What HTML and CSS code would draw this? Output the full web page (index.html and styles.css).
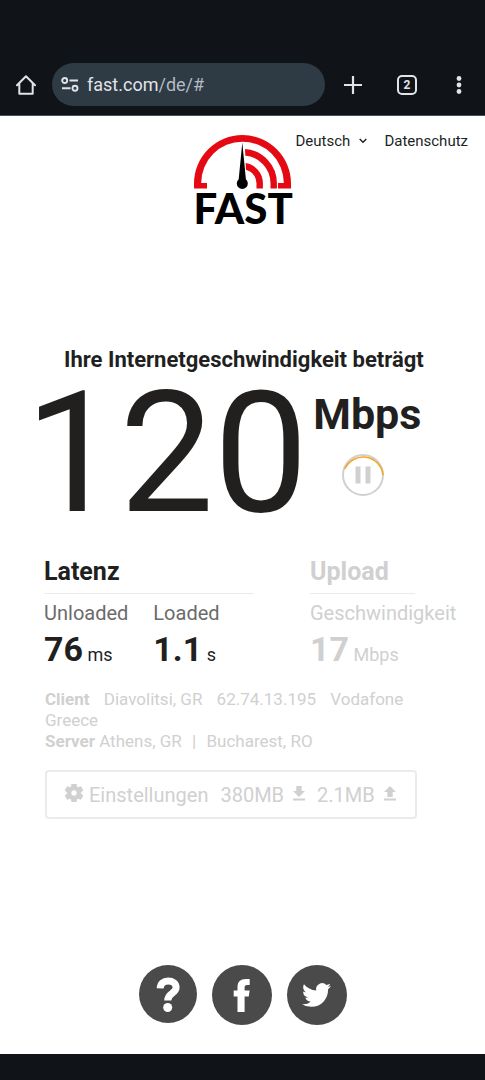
FILE: index.html
```
<!DOCTYPE html>
<html lang="de">
<head>
<meta charset="utf-8">
<meta name="viewport" content="width=device-width, initial-scale=1">
<title>FAST</title>
<link rel="stylesheet" href="styles.css">
</head>
<body>
<header class="browser-bar">
  <button class="bar-button" aria-label="Home">
    <svg width="20" height="20" viewBox="0 0 20 20" fill="none" stroke="currentColor" stroke-width="2" stroke-linejoin="round" stroke-linecap="round"><path d="M1 10.3 10 1.2l9 9.1M3.300 8.200V18.800h13.400V8.200"/></svg>
  </button>
  <a class="address" href="#">
    <svg class="site-icon" width="18" height="15" viewBox="0 0 18 15" fill="none" stroke="currentColor" stroke-width="1.900"><circle cx="3.700" cy="3.500" r="2.500"/><path d="M8.500 3.500H17M1 11.200h8.500"/><circle cx="14" cy="11.200" r="2.500"/></svg>
    <span>fast.com<span class="address-path">/de/#</span></span>
  </a>
  <button class="bar-button wide" aria-label="Neuer Tab">
    <svg width="18" height="18" viewBox="0 0 18 18" stroke="currentColor" stroke-width="2.200"><path d="M9 0v18M0 9h18"/></svg>
  </button>
  <button class="bar-button" aria-label="Tabs"><span class="tab-count">2</span></button>
  <button class="bar-button" aria-label="Menü">
    <svg width="6" height="18" viewBox="0 0 6 18" fill="currentColor"><circle cx="3" cy="2.500" r="2.400"/><circle cx="3" cy="9" r="2.400"/><circle cx="3" cy="15.500" r="2.400"/></svg>
  </button>
</header>

<main class="page">
  <div class="top">
    <a class="logo" href="#">
      <svg width="98" height="56" viewBox="0 0 98 56">
        <path fill="#e50914" d="M0 53.500V48.500a48.500 48.500 0 0 1 97 0V53.500H84V48H89.800A41.300 41.300 0 0 0 7.200 48H13V53.500z"/>
        <g fill="none" stroke="#e50914" stroke-width="6.400">
          <path d="M50.500 17.200A31.200 31.200 0 0 1 79.700 48.300V53.500"/>
          <path d="M50.500 31.300A17.200 17.200 0 0 1 65.700 48.300V53.500"/>
        </g>
        <path fill="#fff" d="M47.800 14h3.200l1.600 35h-5z"/>
        <path d="M48.300 7.500l3.600 36.800a5.500 5.500 0 1 1-7.200 0z"/>
      </svg>
      <span class="logo-text">FAST</span>
    </a>
    <nav class="links">
      <label class="language">
        <select aria-label="Sprache"><option>Deutsch</option></select>
        <svg width="8" height="6" viewBox="0 0 8 6" fill="none" stroke="currentColor" stroke-width="1.400"><path d="M.7 1 4 4.300 7.300 1"/></svg>
      </label>
      <a href="#">Datenschutz</a>
    </nav>
  </div>

  <section class="result">
    <h1 class="headline">Ihre Internetgeschwindigkeit beträgt</h1>
    <div class="speed">
      <span class="speed-value">120</span>
      <div class="speed-side">
        <span class="speed-unit">Mbps</span>
        <button class="pause" aria-label="Pause">
          <svg width="44" height="44" viewBox="0 0 44 44" fill="none"><circle cx="22" cy="22" r="20" stroke="#d0d0d0" stroke-width="2"/><path d="M3.800 16A20 20 0 0 1 42 22" stroke="#f5a623" stroke-width="1.600"/><path fill="#d0d0d0" d="M14.500 13.500h5v17h-5zM24.500 13.500h5v17h-5z"/></svg>
        </button>
      </div>
    </div>
  </section>

  <section class="details">
    <div class="metric">
      <h2>Latenz</h2>
      <div class="readings">
        <div><div class="name">Unloaded</div><div class="reading"><b>76</b> ms</div></div>
        <div><div class="name">Loaded</div><div class="reading"><b>1.1</b> s</div></div>
      </div>
    </div>
    <div class="metric muted">
      <h2>Upload</h2>
      <div class="readings">
        <div><div class="name">Geschwindigkeit</div><div class="reading"><b>17</b> Mbps</div></div>
      </div>
    </div>
  </section>

  <section class="network">
    <p><b>Client</b> <span class="entry">Diavolitsi, GR</span> <span class="entry">62.74.13.195</span> <span class="entry">Vodafone Greece</span></p>
    <p><b>Server</b> <span>Athens, GR</span> <span class="divider">|</span> <span>Bucharest, RO</span></p>
  </section>

  <div class="settings">
    <a class="settings-link" href="#">
      <svg width="18" height="18" viewBox="2 2 20 20" fill="currentColor" stroke="currentColor"><path d="M19.430 12.980c.04-.32.07-.64.07-.98s-.03-.66-.07-.98l2.110-1.650c.19-.15.24-.42.12-.64l-2-3.460c-.12-.22-.39-.3-.61-.22l-2.490 1c-.52-.4-1.080-.73-1.690-.98l-.38-2.650C14.460 2.180 14.250 2 14 2h-4c-.25 0-.46.18-.49.42l-.38 2.650c-.61.25-1.170.59-1.690.98l-2.490-1c-.23-.09-.49 0-.61.22l-2 3.460c-.13.22-.07.49.12.64l2.110 1.650c-.04.32-.07.65-.07.98s.03.66.07.98l-2.110 1.650c-.19.15-.24.42-.12.64l2 3.460c.12.22.39.3.61.22l2.490-1c.52.4 1.080.73 1.690.98l.38 2.650c.03.24.24.42.49.42h4c.25 0 .46-.18.49-.42l.38-2.650c.61-.25 1.170-.59 1.690-.98l2.490 1c.23.09.49 0 .61-.22l2-3.460c.12-.22.07-.49-.12-.64l-2.110-1.650zM12 15.500c-1.930 0-3.500-1.570-3.500-3.500s1.570-3.500 3.500-3.500 3.500 1.570 3.500 3.500-1.570 3.500-3.500 3.500z"/></svg>
      Einstellungen</a>
    <span class="amount">380MB
      <svg width="12" height="15" viewBox="0 0 12 15" fill="currentColor"><path d="M3.300 0h5.400v5H12l-6 6-6-6h3.300zM0 12.600h12v1.800H0z"/></svg>
    </span>
    <span class="amount">2.1MB
      <svg width="12" height="15" viewBox="0 0 12 15" fill="currentColor"><path d="M3.300 11h5.400V6H12L6 0 0 6h3.300zM0 12.600h12v1.800H0z"/></svg>
    </span>
  </div>

  <footer class="social">
    <a class="help" href="#" aria-label="Hilfe">
      <svg width="58" height="58" viewBox="0 0 58 58"><circle cx="29" cy="29" r="29" fill="#4a4a4a"/><path fill="none" stroke="#fff" stroke-width="7" d="M21.200 23.300C21.400 18.400 24.500 16 29.200 16c4.600 0 7.900 2.500 7.900 6.400 0 6-8.400 5.800-8.400 13"/><circle cx="28.700" cy="42.500" r="4.500" fill="#fff"/></svg>
    </a>
    <a href="#" aria-label="Facebook">
      <svg width="60" height="60" viewBox="0 0 60 60"><circle cx="30" cy="30" r="30" fill="#4a4a4a"/><path fill="#fff" d="M25.500 47V31.500h-3.800v-6h3.800v-3.200c0-5.500 3-8.200 8.200-8.200h4v6h-2.400c-2 0-2.700.8-2.700 2.500v2.900h5l-.8 6h-4.200V47z"/></svg>
    </a>
    <a href="#" aria-label="Twitter">
      <svg width="60" height="60" viewBox="0 0 60 60"><circle cx="30" cy="30" r="30" fill="#4a4a4a"/><path fill="#fff" transform="translate(15 15.500) scale(1.210)" d="M23.950 4.570a10 10 0 0 1-2.820.78 4.960 4.960 0 0 0 2.160-2.730c-.95.560-2 .960-3.130 1.180a4.920 4.920 0 0 0-8.380 4.480C7.690 8.100 4.070 6.130 1.640 3.160a4.820 4.820 0 0 0-.67 2.480c0 1.710.87 3.210 2.190 4.100a4.900 4.900 0 0 1-2.230-.62v.06a4.920 4.920 0 0 0 3.950 4.830 5 5 0 0 1-2.210.08 4.940 4.940 0 0 0 4.600 3.420A9.870 9.870 0 0 1 0 19.540a13.990 13.990 0 0 0 7.550 2.210c9.050 0 14-7.500 14-13.980 0-.21 0-.42-.02-.63a9.940 9.940 0 0 0 2.420-2.570z"/></svg>
    </a>
  </footer>
</main>
<div class="system-bar"></div>
</body>
</html>
```

FILE: styles.css
```
* { box-sizing: border-box; }

body {
  margin: 0;
  min-height: 100vh;
  display: flex;
  flex-direction: column;
  background: #fff;
  color: #221f1f;
  font-family: Roboto, "Liberation Sans", sans-serif;
}

h1, h2, p { margin: 0; }
a { color: inherit; text-decoration: none; }
svg { display: block; flex: none; }
button {
  padding: 0;
  border: 0;
  background: none;
  color: inherit;
  font: inherit;
}

.browser-bar {
  display: flex;
  align-items: center;
  padding: 63px 0 9px;
  border-bottom: 1px solid #4b5055;
  background: #101418;
  color: #e1e3e8;
}
.bar-button {
  width: 52px;
  height: 43px;
  display: grid;
  place-items: center;
}
.bar-button.wide { width: 56px; }
.address {
  flex: 1;
  height: 43px;
  padding: 0 9px;
  display: flex;
  align-items: center;
  gap: 8px;
  border-radius: 22px;
  background: #2e3a44;
  font-size: 18px;
}
.address-path { color: #b4bcc4; }
.tab-count {
  width: 20px;
  height: 20px;
  border: 2px solid currentColor;
  border-radius: 5px;
  font-size: 12px;
  font-weight: 700;
  line-height: 16px;
}

.page {
  flex: 1;
  display: flex;
  flex-direction: column;
}

.top {
  display: grid;
  grid-template-columns: 1fr auto 1fr;
  align-items: start;
  padding-top: 19px;
}
.logo { grid-column: 2; width: 98px; }
.logo-text {
  display: block;
  color: #000;
  font: 900 42px/34px Lato, sans-serif;
}
.links {
  display: flex;
  justify-content: space-between;
  align-items: center;
  margin: -4px 17px 0 4px;
  font-size: 15px;
  line-height: 20px;
}
.language {
  display: flex;
  align-items: center;
  gap: 8px;
}
.language select {
  appearance: none;
  padding: 0;
  border: 0;
  background: none;
  color: inherit;
  font: inherit;
}

.result { padding: 121px 0 0 36px; }
.headline {
  padding-left: 28px;
  font-size: 22px;
  line-height: 28px;
}
.speed {
  display: flex;
  gap: 5px;
  margin-left: -11px;
}
.speed-value {
  font-size: 168px;
  line-height: 160px;
}
.speed-side {
  display: flex;
  flex-direction: column;
  align-items: flex-start;
  padding-top: 15px;
}
.speed-unit {
  font-size: 43px;
  font-weight: 700;
  line-height: 50px;
}
.pause { margin: 14px 0 0 28px; }

.details {
  display: grid;
  grid-template-columns: 2fr 1fr;
  gap: 56px;
  padding: 24px 70px 0 44px;
}
.metric { min-width: 0; }
.metric h2 {
  padding-bottom: 7px;
  border-bottom: 1px solid #ebebeb;
  font-size: 25px;
  line-height: 28px;
}
.readings {
  display: flex;
  gap: 25px;
  padding-top: 7px;
  white-space: nowrap;
}
.name {
  color: #6b6b6b;
  font-size: 20px;
  line-height: 24px;
}
.reading {
  font-size: 18px;
  line-height: 48px;
}
.reading b { font-size: 34px; }
.muted, .muted .name { color: #d0d0d0; }

.network {
  padding: 10px 60px 0 45px;
  color: #d0d0d0;
  font-size: 17px;
  line-height: 21px;
}
.entry { margin-left: 10px; }
.divider { margin: 0 6px; }

.settings {
  display: flex;
  align-items: center;
  gap: 12px;
  height: 49px;
  margin: 18px 68px 0 45px;
  padding: 0 18px;
  border: 2px solid #ebebeb;
  border-radius: 4px;
  color: #d0d0d0;
  font-size: 20px;
}
.settings-link {
  display: flex;
  align-items: center;
  gap: 6px;
}
.amount {
  display: flex;
  align-items: center;
  gap: 9px;
}
.settings svg { margin-bottom: 3px; }

.social {
  display: flex;
  justify-content: center;
  gap: 15px;
  margin-top: auto;
  padding-bottom: 29px;
}

.system-bar {
  height: 26px;
  background: #101418;
}
```
